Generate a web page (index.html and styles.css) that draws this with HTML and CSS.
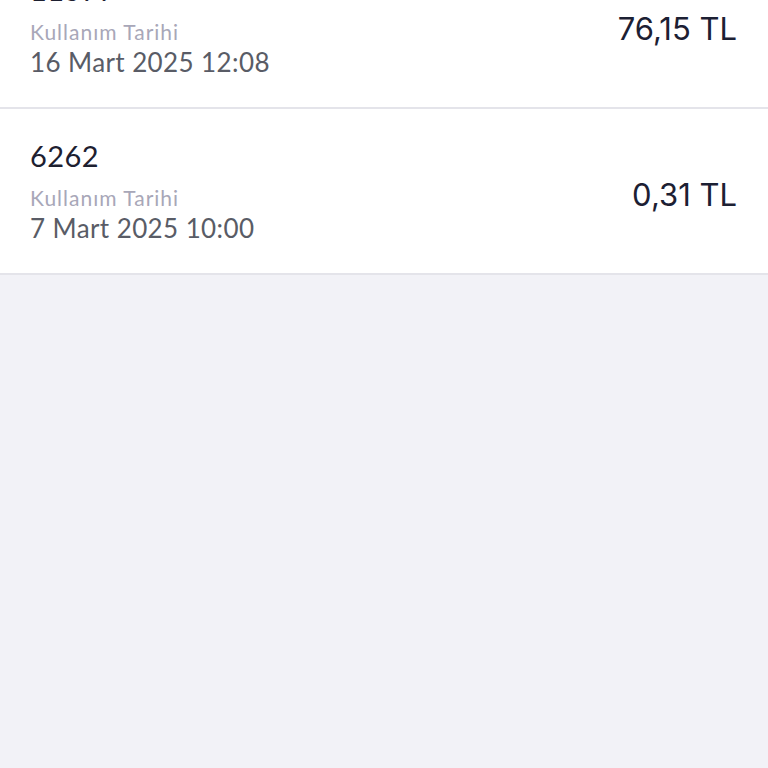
FILE: index.html
```html
<!DOCTYPE html>
<html lang="tr">
  <head>
    <meta charset="UTF-8" />
    <meta name="viewport" content="width=device-width, initial-scale=1.0" />
    <title>Kullanımlar</title>
    <link rel="stylesheet" href="styles.css">
  </head>
  <body>
    <ul class="usage-list">
      <li class="usage-item">
        <div class="usage-info">
          <div class="usage-code">11577</div>
          <div class="usage-label">Kullanım Tarihi</div>
          <div class="usage-date">16 Mart 2025 12:08</div>
        </div>
        <div class="usage-amount">76,15 TL</div>
      </li>
      <li class="usage-item">
        <div class="usage-info">
          <div class="usage-code">6262</div>
          <div class="usage-label">Kullanım Tarihi</div>
          <div class="usage-date">7 Mart 2025 10:00</div>
        </div>
        <div class="usage-amount">0,31 TL</div>
      </li>
    </ul>
  </body>
</html>
```

FILE: styles.css
```css
* {
  box-sizing: border-box;
}
body {
  margin: 0;
  height: 100vh;
  overflow: hidden;
  background-color: #f2f2f7;
  font-family: Lato, "Noto Sans", sans-serif;
}
.usage-list {
  list-style: none;
  margin: -57px 0 0 0;
  padding: 0;
  background-color: #fff;
}
.usage-item {
  display: flex;
  align-items: center;
  justify-content: space-between;
  height: 166px;
  padding: 0 31px 0 30px;
  border-bottom: 2px solid #e4e4ea;
}
.usage-code {
  font-size: 29px;
  line-height: 36px;
  letter-spacing: 0.4px;
  color: #1d2030;
  margin-bottom: 10px;
}
.usage-label {
  font-size: 21px;
  line-height: 28px;
  letter-spacing: 1px;
  color: #a8a7b8;
}
.usage-date {
  font-size: 26px;
  line-height: 32px;
  letter-spacing: 0.4px;
  color: #595c66;
}
.usage-amount {
  margin-top: 7px;
  font-family: Inter, "Noto Sans", sans-serif;
  font-size: 31px;
  color: #1c2033;
}
```
